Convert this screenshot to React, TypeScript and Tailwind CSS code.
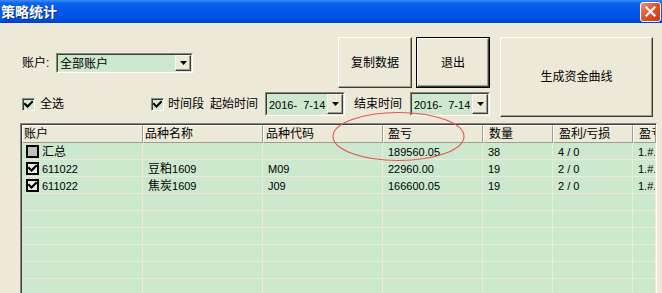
import React from "react";

type Cell = { text?: string; box?: "none" | "gray" | "checked" };

const rows: Cell[][] = [
  [{ text: "汇总", box: "gray" }, {}, {}, { text: "189560.05" }, { text: "38" }, { text: "4 / 0" }, { text: "1.#." }],
  [{ text: "611022", box: "checked" }, { text: "豆粕1609" }, { text: "M09" }, { text: "22960.00" }, { text: "19" }, { text: "2 / 0" }, { text: "1.#." }],
  [{ text: "611022", box: "checked" }, { text: "焦炭1609" }, { text: "J09" }, { text: "166600.05" }, { text: "19" }, { text: "2 / 0" }, { text: "1.#." }],
];

const headers = [
  { label: "账户", pad: "pl-[1px]" },
  { label: "品种名称", pad: "pl-[1px]" },
  { label: "品种代码", pad: "pl-[2px]" },
  { label: "盈亏", pad: "pl-[4px]" },
  { label: "数量", pad: "pl-[5px]" },
  { label: "盈利/亏损", pad: "pl-[5px]" },
  { label: "盈亏比", pad: "pl-[5px]" },
];

const gridCols = "grid grid-cols-[121px_120px_120px_100px_70px_80px_1fr]";

function Check() {
  return (
    <svg width="9" height="9" viewBox="0 0 9 9" className="block">
      <path d="M1 4 L3.5 6.5 L8 2" fill="none" stroke="#000" strokeWidth="2" strokeLinecap="square" />
    </svg>
  );
}

function CheckBox() {
  return (
    <div className="flex h-[13px] w-[13px] items-center justify-center border border-t-[#8a887c] border-l-[#8a887c] border-b-white border-r-white bg-[#d4e8d2] shadow-[inset_1px_1px_0_#3c3c3c]">
      <Check />
    </div>
  );
}

function DropBtn() {
  return (
    <div className="flex h-full w-[16px] shrink-0 items-center justify-center border border-t-[#f7f6f0] border-l-[#f7f6f0] border-b-[#3c3c3c] border-r-[#3c3c3c] bg-[#ece9d8] shadow-[inset_-1px_-1px_0_#a09d8e]">
      <svg width="7" height="4" viewBox="0 0 7 4" className="block">
        <path d="M0 0H7L3.5 4Z" fill="#000" />
      </svg>
    </div>
  );
}

function CellText({ text }: { text: string }) {
  // chinese glyphs at 12px, digits at the smaller tahoma-ish size
  const parts = text.match(/[\u4e00-\u9fff]+|[^\u4e00-\u9fff]+/g) || [];
  return (
    <span className="whitespace-pre leading-none">
      {parts.map((p, i) =>
        /[\u4e00-\u9fff]/.test(p) ? (
          <span key={i} className="text-[12px]">{p}</span>
        ) : (
          <span key={i} className="text-[11px]">{p}</span>
        )
      )}
    </span>
  );
}

function Combo({ text, size }: { text: string; size: string }) {
  return (
    <div className={`flex border border-t-[#8a887c] border-l-[#8a887c] border-b-white border-r-white ${size}`}>
      <div className="flex flex-1 border border-t-[#3c3c3c] border-l-[#3c3c3c] border-b-[#e4e1d2] border-r-[#e4e1d2] bg-[#cce8cf]">
        <span className="flex-1 self-center pl-[2px] leading-none">
          <CellText text={text} />
        </span>
        <DropBtn />
      </div>
    </div>
  );
}

function Button({ label, size, isDefault }: { label: string; size: string; isDefault?: boolean }) {
  return (
    <div className={`${size} ${isDefault ? "border border-black" : ""}`}>
      <div className="flex h-full w-full items-center justify-center border border-t-white border-l-white border-b-[#3c3c3c] border-r-[#3c3c3c] bg-[#ece9d8] shadow-[inset_-1px_-1px_0_#a09d8e] text-[12px] leading-none">
        {label}
      </div>
    </div>
  );
}

function RowBox({ kind }: { kind: "gray" | "checked" }) {
  return (
    <div
      className={`flex h-[13px] w-[13px] shrink-0 items-center justify-center border-2 border-black ${
        kind === "gray" ? "bg-[#c0c0c0]" : "bg-[#ececec]"
      }`}
    >
      {kind === "checked" && <Check />}
    </div>
  );
}

export default function App() {
  const empty: Cell[] = [{}, {}, {}, {}, {}, {}, {}];
  const allRows = [...rows, empty, empty, empty, empty, empty, empty, empty, empty];

  return (
    <div className="relative h-[293px] w-[662px] overflow-hidden bg-[#ece9d8] font-['Liberation_Sans','Noto_Sans_CJK_SC',sans-serif] text-black">
      {/* title bar */}
      <div className="flex h-[23px] items-center justify-between bg-[linear-gradient(180deg,#3d8ef8_0%,#0a63ef_14%,#0058e6_50%,#0052e0_82%,#0041c9_100%)]">
        <span className="pl-[1px] text-[14px] font-bold leading-none text-white [text-shadow:1px_1px_0_#0a2a82]">策略统计</span>
        <div className="mr-[1px] flex h-[20px] w-[21px] items-center justify-center rounded-[3px] border border-white bg-[linear-gradient(135deg,#ef9275_0%,#e0552f_45%,#c73a15_100%)]">
          <svg width="11" height="11" viewBox="0 0 11 11" className="block">
            <path d="M1.5 1.5 L9.5 9.5 M9.5 1.5 L1.5 9.5" stroke="#fff" strokeWidth="2.2" strokeLinecap="square" />
          </svg>
        </div>
      </div>

      {/* controls */}
      <div className="flex items-start pt-[14px]">
        <div className="flex w-[490px] flex-col pl-[22px]">
          <div className="flex h-[51px] items-center">
            <span className="w-[34px] text-[12px] leading-none">账户:</span>
            <Combo text="全部账户" size="h-[20px] w-[137px]" />
            <div className="ml-auto flex gap-[4px]">
              <Button label="复制数据" size="h-[51px] w-[74px]" />
              <Button label="退出" size="h-[51px] w-[74px]" isDefault />
            </div>
          </div>
          <div className="mt-[4px] flex h-[24px] items-center">
            <div className="flex w-[129px] items-center">
              <CheckBox />
              <span className="ml-[5px] text-[12px] leading-none">全选</span>
            </div>
            <CheckBox />
            <span className="ml-[4px] text-[12px] leading-none">时间段</span>
            <span className="ml-[6px] text-[12px] leading-none">起始时间</span>
            <div className="ml-[7px]">
              <Combo text="2016-  7-14" size="h-[24px] w-[80px]" />
            </div>
            <span className="ml-[9px] text-[12px] leading-none">结束时间</span>
            <div className="ml-[8px]">
              <Combo text="2016-  7-14" size="h-[24px] w-[80px]" />
            </div>
          </div>
        </div>
        <div className="ml-[10px]">
          <Button label="生成资金曲线" size="h-[80px] w-[153px]" />
        </div>
      </div>

      {/* table */}
      <div className="ml-[20px] mt-[6px] w-[637px] border-t border-l border-t-[#8a887c] border-l-[#8a887c] border-r border-r-white">
        <div className="border-t border-l border-t-[#3c3c3c] border-l-[#3c3c3c]">
          <div className={`${gridCols} h-[18px]`}>
            {headers.map((h) => (
              <div
                key={h.label}
                className={`flex items-center overflow-hidden whitespace-nowrap border-t border-l border-t-white border-l-white border-b border-r border-b-[#a09d8e] border-r-[#a09d8e] bg-[#ece9d8] text-[12px] leading-none ${h.pad}`}
              >
                {h.label}
              </div>
            ))}
          </div>
          {allRows.map((r, ri) => (
            <div key={ri} className={`${gridCols} h-[17px] bg-[#cce8cf]`}>
              {r.map((c, ci) => (
                <div
                  key={ci}
                  className={`flex items-center overflow-hidden border-b border-r border-[#eeead9] ${ci === 0 ? "pl-[4px]" : "pl-[5px]"}`}
                >
                  {c.box && c.box !== "none" && <RowBox kind={c.box} />}
                  {c.text && (
                    <span className={c.box ? "ml-[3px]" : ""}>
                      <CellText text={c.text} />
                    </span>
                  )}
                </div>
              ))}
            </div>
          ))}
        </div>
      </div>

      {/* red annotation ellipse */}
      <svg className="pointer-events-none absolute left-[331px] top-[111px]" width="136" height="52" viewBox="0 0 136 52">
        <ellipse cx="67.5" cy="25.5" rx="65.5" ry="24" fill="none" stroke="#e4574f" strokeWidth="1.1" />
      </svg>
    </div>
  );
}
